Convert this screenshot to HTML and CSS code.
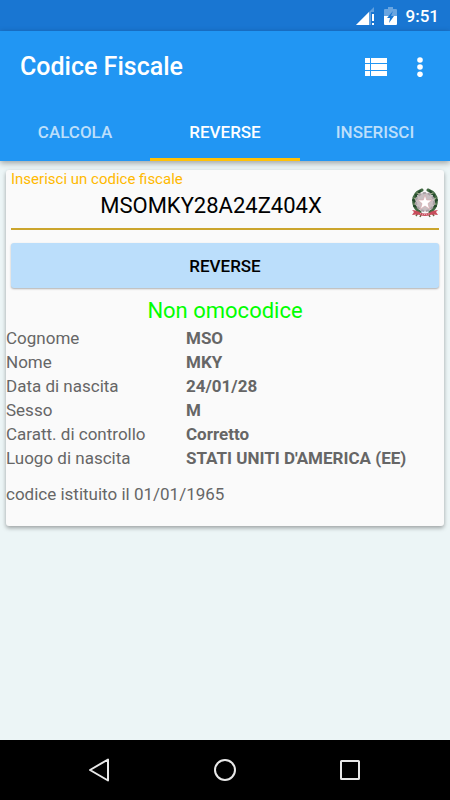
FILE: index.html
```html
<!DOCTYPE html>
<html lang="it">
<head>
<meta charset="utf-8">
<meta name="viewport" content="width=device-width, initial-scale=1">
<title>Codice Fiscale</title>
<link rel="stylesheet" href="styles.css">
</head>
<body>
<div class="status">
  <svg width="18" height="18" viewBox="0 0 18 18" aria-hidden="true">
    <path d="M18 0V5H15V18H0Z" fill="#fff" fill-opacity=".3"/>
    <path d="M0 18L13 5V18Z" fill="#fff"/>
    <path d="M16 7h2v7h-2zM16 16h2v2h-2z" fill="#fff"/>
  </svg>
  <svg class="battery" width="13" height="18" viewBox="0 0 13 18" aria-hidden="true">
    <path d="M4 0H9V2H12Q13 2 13 3V9H0V3Q0 2 1 2H4Z" fill="#fff" fill-opacity=".35"/>
    <path d="M0 9H13V17Q13 18 12 18H1Q0 18 0 17Z" fill="#fff"/>
    <path d="M9 4L3 11H6L5 16L10 9H7Z" fill="#1976d2"/>
  </svg>
  <time>9:51</time>
</div>
<header class="appbar">
  <div class="toolbar">
    <h1>Codice Fiscale</h1>
    <button class="icon-button" type="button" aria-label="Elenco">
      <svg width="22" height="18" viewBox="0 0 22 18"><path d="M0 0h5v5H0zM6 0h16v5H6zM0 6h5v6H0zM6 6h16v6H6zM0 13h5v5H0zM6 13h16v5H6z" fill="#fff"/><path d="M0 5.5H22M0 12.5H22" stroke="#2196f3"/></svg>
    </button>
    <button class="icon-button" type="button" aria-label="Altre opzioni">
      <svg width="6" height="20" viewBox="0 0 6 20" fill="#fff"><circle cx="3" cy="3" r="2.8"/><circle cx="3" cy="10" r="2.8"/><circle cx="3" cy="17.300" r="2.8"/></svg>
    </button>
  </div>
  <nav class="tabs">
    <a href="#calcola">CALCOLA</a>
    <a href="#reverse" class="active" aria-current="page">REVERSE</a>
    <a href="#inserisci">INSERISCI</a>
  </nav>
</header>
<main>
  <section class="card">
    <div class="form">
      <label for="code">Inserisci un codice fiscale</label>
      <div class="field">
        <input id="code" type="text" value="MSOMKY28A24Z404X" maxlength="16" spellcheck="false">
        <svg class="emblem" width="28" height="30" viewBox="0 0 28 30" aria-hidden="true">
          <g fill="none" stroke-linecap="round">
            <path d="M11 2Q1 6 3 16Q4 21 9 24M17 2Q27 6 25 16Q24 21 19 24" stroke="#416842" stroke-width="3"/>
            <path d="M9 3L7 6M5 7L6 10M2 12L5 14M3 18L7 19M19 3L21 6M23 7L22 10M26 12L23 14M25 18L21 19" stroke="#23472b" stroke-width="2"/>
            <path d="M6 5L9 6M3 10L6 12M3 16L6 16M22 5L19 6M25 10L22 12M25 16L22 16" stroke="#a4af8e"/>
          </g>
          <circle cx="14" cy="14" r="9.500" fill="#c9bfc2"/>
          <circle cx="14" cy="14" r="9" fill="none" stroke="#aaa0a5" stroke-width="2" stroke-dasharray="3 2"/>
          <path d="M14 7L15.700 12L21 12L17 15.500L18.500 21L14 18L9.500 21L11 15.500L7 12L12.300 12Z" fill="#fff" stroke="#d9a5aa" stroke-width=".6"/>
          <path d="M8 23L5 28M20 23L23 28M11 25L9 29M17 25L19 29" stroke="#6d6045" stroke-width="1.500"/>
          <path d="M1 22Q5 22 8 24Q14 27 20 24Q23 22 27 22L25 24L27 27Q22 26 19 27Q14 29 9 27Q6 26 1 27L3 24Z" fill="#c94c5c"/>
          <path d="M9 25.500Q14 27.500 19 25.500" fill="none" stroke="#f0c8cd" stroke-dasharray="1 1"/>
        </svg>
      </div>
      <button class="submit" type="button">REVERSE</button>
    </div>
    <p class="result">Non omocodice</p>
    <dl>
      <dt>Cognome</dt><dd>MSO</dd>
      <dt>Nome</dt><dd>MKY</dd>
      <dt>Data di nascita</dt><dd>24/01/28</dd>
      <dt>Sesso</dt><dd>M</dd>
      <dt>Caratt. di controllo</dt><dd>Corretto</dd>
      <dt>Luogo di nascita</dt><dd>STATI UNITI D'AMERICA (EE)</dd>
    </dl>
    <p class="note">codice istituito il 01/01/1965</p>
  </section>
</main>
<nav class="system" aria-label="Sistema">
  <button type="button" aria-label="Indietro"><svg width="24" height="24" viewBox="0 0 24 24"><path d="M20 1.500V22.500L2 12Z"/></svg></button>
  <button type="button" aria-label="Home"><svg width="24" height="24" viewBox="0 0 24 24"><circle cx="12" cy="12" r="10"/></svg></button>
  <button type="button" aria-label="Recenti"><svg width="24" height="24" viewBox="0 0 24 24"><rect x="3" y="3" width="18" height="18" rx=".5"/></svg></button>
</nav>
</body>
</html>
```
FILE: styles.css
```css
* { box-sizing: border-box; }

body {
  margin: 0;
  min-height: 100vh;
  display: flex;
  flex-direction: column;
  background: #ecf5f6;
  color: #666;
  font: 17px/24px Roboto, "Liberation Sans", sans-serif;
}

button, input {
  font: inherit;
  border: 0;
  padding: 0;
  background: none;
}

h1, p, dl, dd { margin: 0; }
svg { display: block; }

.status {
  display: flex;
  align-items: center;
  justify-content: flex-end;
  padding: 4px 11px 3px;
  background: #1976d2;
  color: #fff;
  font-weight: 500;
}

.battery { margin: 0 9px 0 10px; }

.appbar {
  position: relative;
  background: #2196f3;
  box-shadow: 0 2px 6px rgba(0, 0, 0, .35);
}

.toolbar {
  display: flex;
  align-items: center;
  height: 72px;
  padding: 0 8px 0 20px;
}

h1 {
  flex: 1;
  color: #fff;
  font-size: 25px;
  font-weight: 500;
  line-height: 30px;
}

.icon-button {
  display: grid;
  place-items: center;
  width: 44px;
  height: 44px;
}

.tabs {
  display: grid;
  grid-template-columns: repeat(3, 1fr);
}

.tabs a {
  padding: 17px 0 14px;
  border-bottom: 3px solid transparent;
  color: #bcdffb;
  font-weight: 500;
  text-align: center;
  text-decoration: none;
}

.tabs .active {
  border-color: #ffc107;
  color: #fff;
}

main {
  flex: 1;
  padding: 9px 6px;
}

.card {
  padding-bottom: 20px;
  border-radius: 3px;
  background: #fafafa;
  box-shadow: 0 2px 4px rgba(0, 0, 0, .35);
}

.form { padding: 0 5px; }

label {
  display: block;
  color: #ffb900;
  font-size: 15px;
  line-height: 18px;
}

.field {
  display: flex;
  align-items: flex-start;
  height: 42px;
  border-bottom: 2px solid #cba52d;
}

.field input {
  flex: 1;
  min-width: 0;
  height: 34px;
  color: #000;
  font-size: 22px;
  text-align: center;
  outline: 0;
}

.submit {
  display: block;
  width: 100%;
  height: 45px;
  margin-top: 13px;
  border-radius: 3px;
  background: #bbdefb;
  box-shadow: 0 1px 2px rgba(0, 0, 0, .3);
  color: #000;
  font-weight: 500;
}

.result {
  margin-top: 8px;
  color: #0f0;
  font-size: 22px;
  line-height: 30px;
  text-align: center;
}

dl {
  display: grid;
  grid-template-columns: 180px 1fr;
}

dd { font-weight: 700; }

.note { margin-top: 12px; }

.system {
  display: flex;
  justify-content: center;
  gap: 65px;
  background: #000;
}

.system button {
  display: grid;
  place-items: center;
  width: 60px;
  height: 60px;
}

.system svg {
  fill: none;
  stroke: #e8e8e8;
  stroke-width: 2;
  stroke-linejoin: round;
}
```
